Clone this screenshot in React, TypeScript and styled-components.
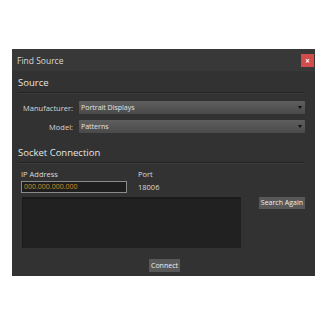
import styled, { createGlobalStyle } from 'styled-components';

const GlobalStyle = createGlobalStyle`
  body {
    margin: 0;
    background: #ffffff;
    font-family: "Open Sans", "Noto Sans", sans-serif;
  }
`;

const App = () => {
  return (
    <>
      <GlobalStyle />
      <Page>
        <Dialog>
          <TitleBar>
            <Title>Find Source</Title>
            <CloseButton>×</CloseButton>
          </TitleBar>

          <Body>
            <SectionTitle>Source</SectionTitle>
            <FormRows>
              <FormRow>
                <Label>Manufacturer:</Label>
                <Select>
                  <span>Portrait Displays</span>
                  <Caret />
                </Select>
              </FormRow>
              <FormRow>
                <Label>Model:</Label>
                <Select>
                  <span>Patterns</span>
                  <Caret />
                </Select>
              </FormRow>
            </FormRows>

            <SectionTitle $top={13}>Socket Connection</SectionTitle>
            <SocketGrid>
              <FieldLabel>IP Address</FieldLabel>
              <FieldLabel>Port</FieldLabel>
              <IpInput>000.000.000.000</IpInput>
              <PortValue>18006</PortValue>
            </SocketGrid>
            <ResultRow>
              <ResultList />
              <SmallButton>Search Again</SmallButton>
            </ResultRow>
            <Footer>
              <SmallButton $tall>Connect</SmallButton>
            </Footer>
          </Body>
        </Dialog>
      </Page>
    </>
  );
};

export default App;

const Page = styled.div`
  width: 326px;
  height: 326px;
  padding: 49px 0 0 12px;
  box-sizing: border-box;
`;

const Dialog = styled.div`
  width: 303px;
  height: 227px;
  background: #323232;
  display: flex;
  flex-direction: column;
`;

const TitleBar = styled.div`
  height: 22px;
  display: flex;
  align-items: center;
  justify-content: space-between;
  padding: 0 1px 0 5px;
  background: #383838;
`;

const Title = styled.div`
  font-size: 8.5px;
  color: #d8d8d8;
`;

const CloseButton = styled.div`
  width: 13px;
  height: 13px;
  background: #d24c4c;
  color: #fff;
  font-size: 8px;
  line-height: 13px;
  text-align: center;
  font-weight: 700;
`;

const Body = styled.div`
  padding: 0 10px 0 6px;
  display: flex;
  flex-direction: column;
`;

const SectionTitle = styled.div<{ $top?: number }>`
  margin-top: ${({ $top }) => $top ?? 5}px;
  padding-bottom: 3px;
  font-size: 9.5px;
  color: #e6e6e6;
  border-bottom: 1px solid #232323;
  box-shadow: 0 1px 0 #3c3c3c;
`;

const FormRows = styled.div`
  display: flex;
  flex-direction: column;
  gap: 6px;
  margin-top: 8px;
`;

const FormRow = styled.div`
  display: grid;
  grid-template-columns: 55px 1fr;
  gap: 6px;
  align-items: center;
`;

const Label = styled.div`
  text-align: right;
  font-size: 7.5px;
  color: #d6d6d6;
`;

const Select = styled.div`
  height: 13px;
  display: flex;
  align-items: center;
  justify-content: space-between;
  padding: 0 3px 0 2px;
  background: linear-gradient(#5e5e5e, #4a4a4a);
  border-radius: 1px;
  font-size: 7px;
  color: #e4e4e4;
`;

const Caret = styled.div`
  width: 0;
  height: 0;
  border-left: 2.5px solid transparent;
  border-right: 2.5px solid transparent;
  border-top: 3px solid #111;
`;

const SocketGrid = styled.div`
  display: grid;
  grid-template-columns: 106px 1fr;
  column-gap: 11px;
  row-gap: 2px;
  margin: 6px 0 0 3px;
  align-items: center;
`;

const FieldLabel = styled.div`
  font-size: 7.5px;
  color: #dcdcdc;
`;

const IpInput = styled.div`
  height: 10px;
  padding: 0 2px;
  border: 1px solid #8a8a8a;
  background: #1e1e1e;
  font-size: 7px;
  line-height: 10px;
  color: #d68c2a;
`;

const PortValue = styled.div`
  font-size: 7.5px;
  color: #dcdcdc;
`;

const ResultRow = styled.div`
  display: flex;
  justify-content: space-between;
  align-items: flex-start;
  margin: 4px 0 0 4px;
`;

const ResultList = styled.div`
  width: 219px;
  height: 51px;
  background: #212121;
  border-top: 2px solid #1a1a1a;
  border-left: 1px solid #1b1b1b;
  box-sizing: border-box;
`;

const SmallButton = styled.div<{ $tall?: boolean }>`
  height: ${({ $tall }) => ($tall ? 13 : 12)}px;
  padding: 0 2px;
  background: #585858;
  color: #ededed;
  font-size: 7px;
  line-height: ${({ $tall }) => ($tall ? 13 : 12)}px;
`;

const Footer = styled.div`
  display: flex;
  justify-content: center;
  margin: 11px 0 0 6px;
`;
